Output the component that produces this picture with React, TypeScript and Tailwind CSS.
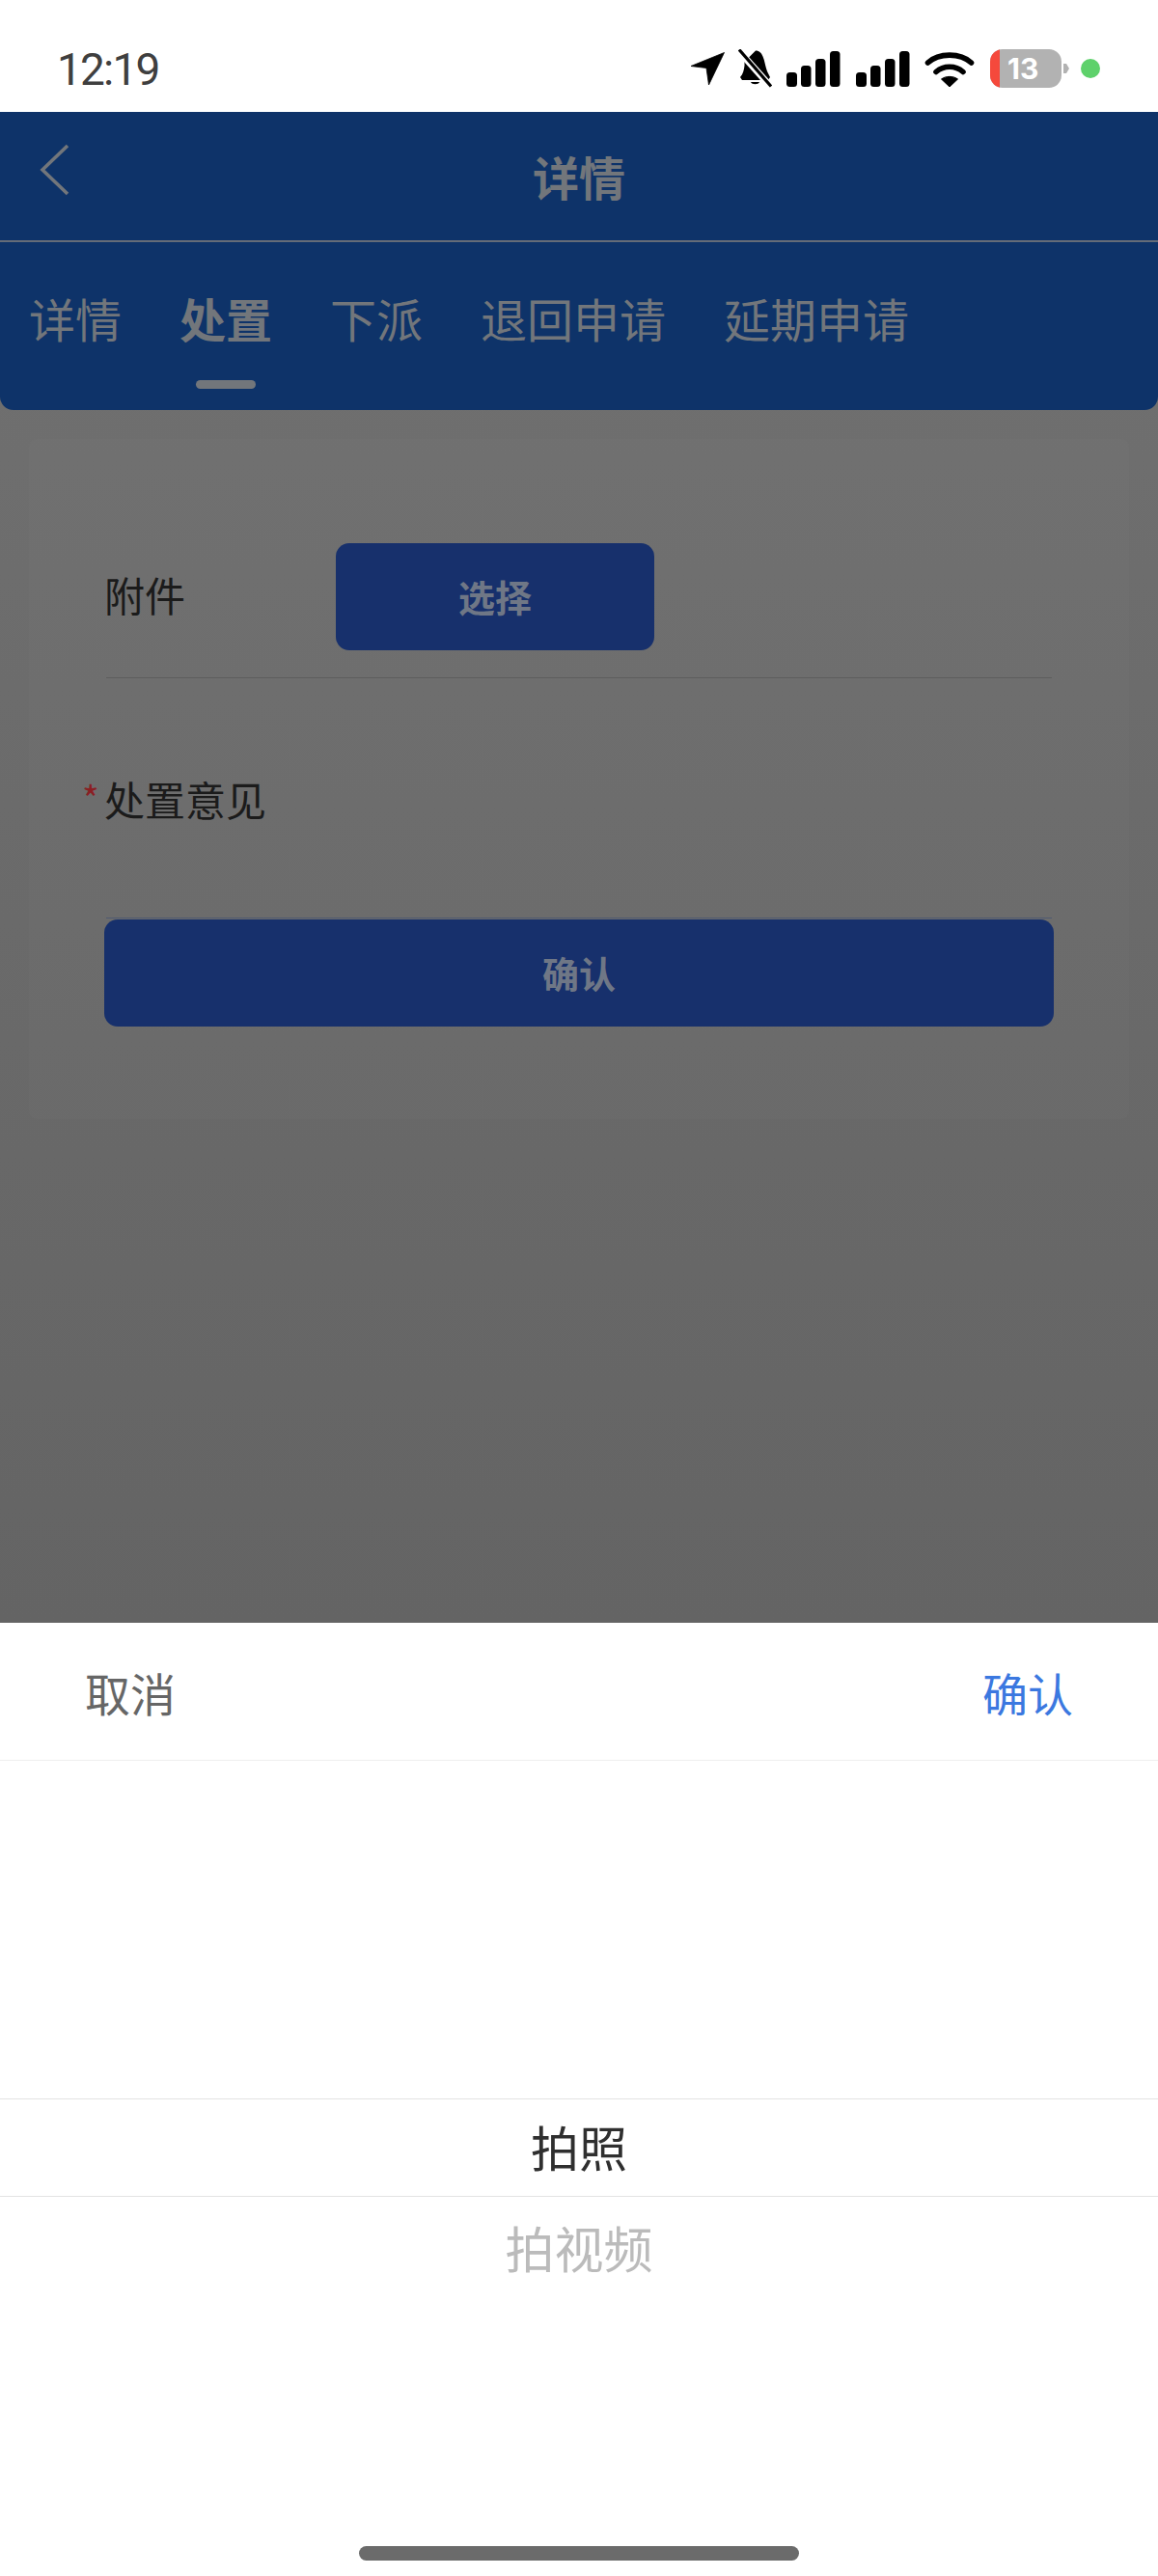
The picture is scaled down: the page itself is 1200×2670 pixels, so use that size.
const tabs = [
  { label: '详情', active: false },
  { label: '处置', active: true },
  { label: '下派', active: false },
  { label: '退回申请', active: false },
  { label: '延期申请', active: false },
];

function SignalIcon({ className }: { className?: string }) {
  return (
    <svg width="56" height="37" viewBox="0 0 56 37" className={className}>
      <rect x="0" y="22" width="11" height="15" rx="3.5" fill="#000" />
      <rect x="15" y="15" width="10.5" height="22" rx="3.5" fill="#000" />
      <rect x="30" y="8" width="10.5" height="29" rx="3.5" fill="#000" />
      <rect x="45" y="0" width="10.5" height="37" rx="3.5" fill="#000" />
    </svg>
  );
}

function StatusBar() {
  return (
    <div className="flex h-[116px] items-start bg-white pl-[59px] pr-[60px]">
      <span className="mt-[46px] font-['Roboto',sans-serif] text-[46px] leading-[52px] tracking-[-1.8px] text-[#3f3f3f]">
        12:19
      </span>
      <div className="ml-auto mt-[51px] flex items-center">
        <svg width="35" height="34" viewBox="0 0 35 34">
          <path d="M0 14.5 L34.5 0.5 L18.5 34 L16 16.5 Z" fill="#000" stroke="#000" strokeWidth="0.8" strokeLinejoin="round" />
        </svg>
        <svg width="35" height="40" viewBox="0 0 35 40" className="ml-[14px]">
          <path d="M18 1.5 C22 1.5 24 4 25.5 7.5 C27.5 12 28 18 30 23 L33 29 L31 32 L4 32 L2 29 C5 26 6 21 6.5 17 L6.5 13 Z" fill="#000" />
          <path d="M13 34 L22 34 C21 37 14 37 13 34 Z" fill="#000" />
          <path d="M1 2 L33 38" stroke="#fff" strokeWidth="7" />
          <path d="M1 0.5 L34 38.5" stroke="#000" strokeWidth="3.2" />
        </svg>
        <SignalIcon className="ml-[15px]" />
        <SignalIcon className="ml-[16px]" />
        <svg width="52" height="38" viewBox="0 0 52 38" className="ml-[15px]">
          <path d="M3.5 13 C15 2.5 37 2.5 48.5 13" fill="none" stroke="#000" strokeWidth="5.6" strokeLinecap="round" />
          <path d="M12 22.5 C20 15.5 32 15.5 40 22.5" fill="none" stroke="#000" strokeWidth="5.6" strokeLinecap="round" />
          <path d="M17.5 30 C22 26.5 30 26.5 34.5 30 L26 38 Z" fill="#000" stroke="#000" strokeWidth="1" strokeLinejoin="round" />
        </svg>
        <div className="ml-[16px] flex h-[40px] w-[74px] items-center overflow-hidden rounded-[13px] bg-[#b2b2b2]">
          <div className="h-full w-[10px] shrink-0 bg-[#f5493c]" />
          <span className="ml-[8px] font-['Inter',sans-serif] text-[30px] font-bold leading-none text-white">13</span>
        </div>
        <svg width="6" height="10" viewBox="0 0 6 10" className="ml-[2px]">
          <path d="M0 0 L3 0 L6 5 L3 10 L0 10 Z" fill="#b2b2b2" />
        </svg>
        <div className="ml-[12px] h-[20px] w-[20px] rounded-full bg-[#5ed16b]" />
      </div>
    </div>
  );
}

function Header() {
  return (
    <div className="rounded-b-[14px] bg-[#0e3369] text-[#72767b]">
      <div className="grid h-[135px] grid-cols-[1fr_auto_1fr] border-b-[2px] border-[#646c78]">
        <svg width="32" height="54" viewBox="0 0 32 54" className="ml-[41px] mt-[33px]">
          <path d="M29 2 L3 27 L29 52" fill="none" stroke="#72767b" strokeWidth="3.6" />
        </svg>
        <h1 className="text-[48px] font-bold leading-[133px]">详情</h1>
        <div />
      </div>
      <div className="flex h-[174px] gap-[60px] pl-[30px] pt-[48px]">
        {tabs.map(tab => (
          <div key={tab.label} className="flex flex-col items-center">
            <span className={`text-[48px] leading-[60px] ${tab.active ? 'font-bold' : 'font-normal'}`}>{tab.label}</span>
            {tab.active && <div className="mt-[35px] h-[9px] w-[62px] rounded-full bg-[#72767b]" />}
          </div>
        ))}
      </div>
    </div>
  );
}

function FormCard() {
  return (
    <div className="mx-[30px] mt-[30px] h-[705px] rounded-[8px] bg-white/[0.015] px-[78px] pt-[108px]">
      <div className="flex items-center">
        <span className="mb-[5px] w-[240px] text-[42px] leading-[60px] text-[#1b1b1b]">附件</span>
        <button className="h-[111px] w-[330px] rounded-[14px] bg-[#17306c] pb-[2px] text-[38px] font-bold text-[#6f7786]">选择</button>
      </div>
      <div className="mx-[2px] mt-[28px] border-b border-[#5e5e5e]" />
      <div className="-ml-[23px] mt-[95px] flex">
        <span className="mt-[4px] w-[23px] text-[38px] leading-[50px] text-[#8a1f24]">*</span>
        <span className="text-[42px] leading-[60px] text-[#1b1b1b]">处置意见</span>
      </div>
      <div className="mx-[2px] mt-[93px] border-b border-[#4f5a70]" />
      <button className="mt-[1px] h-[111px] w-full rounded-[14px] bg-[#17306c] pb-[2px] text-[38px] font-bold text-[#6f7786]">确认</button>
    </div>
  );
}

function PickerSheet() {
  return (
    <div className="flex h-[988px] flex-col bg-white">
      <div className="flex h-[143px] items-center justify-between border-b border-[#eeeeee] px-[88px] pt-[2px] text-[47px]">
        <span className="text-[#666666]">取消</span>
        <span className="text-[#3b78e0]">确认</span>
      </div>
      <div className="mt-[350px] flex h-[102px] items-center justify-center border-y border-[#e3e3e3] pb-[3px] text-[50px] text-[#2f2f2f]">
        拍照
      </div>
      <div className="flex h-[110px] items-center justify-center pb-[6px] text-[51px] text-[#bbbbbb]">拍视频</div>
      <div className="mx-auto mb-[16px] mt-auto h-[15px] w-[456px] rounded-full bg-[#6b6b6b]" />
    </div>
  );
}

export default function App() {
  return (
    <div className="flex h-[2670px] w-[1200px] flex-col overflow-hidden bg-white font-['Noto_Sans_CJK_SC',sans-serif]">
      <StatusBar />
      <div className="flex flex-1 flex-col bg-gradient-to-b from-[#717171] to-[#646464]">
        <Header />
        <FormCard />
      </div>
      <PickerSheet />
    </div>
  );
}
